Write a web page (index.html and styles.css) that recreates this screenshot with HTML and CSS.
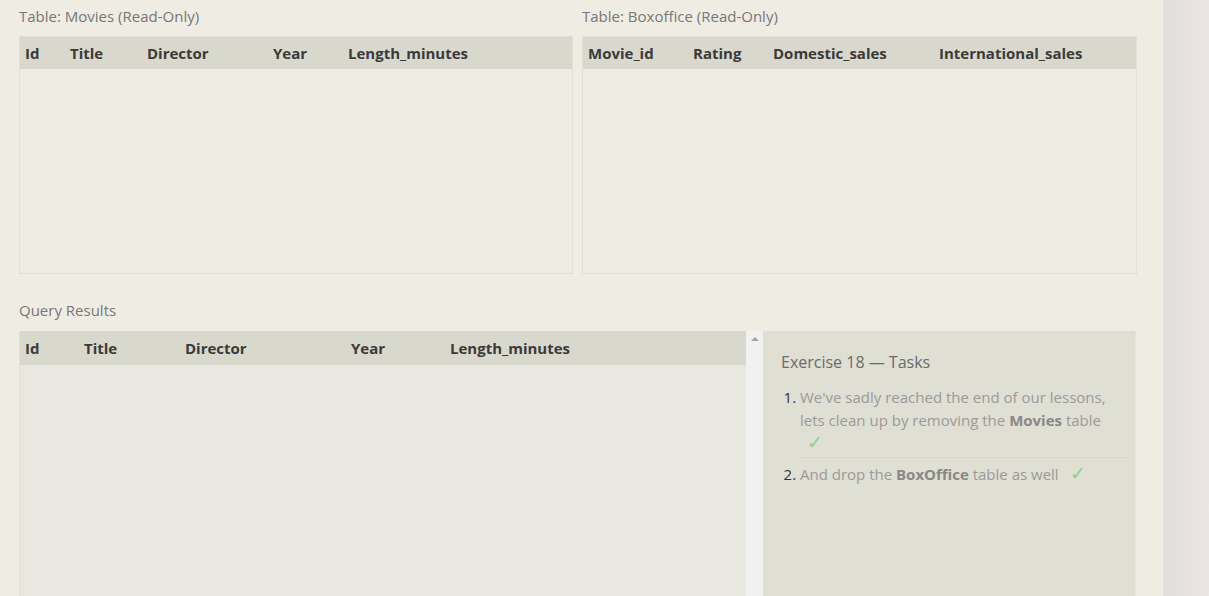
FILE: index.html
```html
<!DOCTYPE html>
<html>
<head>
<meta charset="utf-8">
<link rel="stylesheet" href="styles.css">
</head>
<body>
<div class="page">
  <main class="main">
    <div class="tables">
      <section class="tsec">
        <div class="label">Table: Movies (Read-Only)</div>
        <div class="tbox">
          <table class="grid movies">
            <thead><tr><th>Id</th><th>Title</th><th>Director</th><th>Year</th><th>Length_minutes</th></tr></thead>
          </table>
        </div>
      </section>
      <section class="tsec">
        <div class="label">Table: Boxoffice (Read-Only)</div>
        <div class="tbox">
          <table class="grid boxoffice">
            <thead><tr><th>Movie_id</th><th>Rating</th><th>Domestic_sales</th><th>International_sales</th></tr></thead>
          </table>
        </div>
      </section>
    </div>

    <div class="label qlabel">Query Results</div>
    <div class="results-row">
      <div class="rbox">
        <table class="grid results">
          <thead><tr><th>Id</th><th>Title</th><th>Director</th><th>Year</th><th>Length_minutes</th></tr></thead>
        </table>
      </div>
      <div class="scrollbar"><span class="arrow"></span></div>
      <aside class="tasks">
        <h2 class="tasks-title">Exercise 18 — Tasks</h2>
        <ol class="task-list">
          <li>We've sadly reached the end of our lessons, lets clean up by removing the <b>Movies</b> table <span class="check">✓</span></li>
          <li>And drop the <b>BoxOffice</b> table as well <span class="check">✓</span></li>
        </ol>
      </aside>
    </div>
  </main>
  <div class="side"></div>
</div>
</body>
</html>
```

FILE: styles.css
```css
html, body {
  margin: 0;
  padding: 0;
  height: 100%;
  overflow: hidden;
}
body {
  font-family: "Open Sans", "Noto Sans", sans-serif;
  background: #ebe6e3;
}
.page {
  display: flex;
  height: 596px;
}
.main {
  width: 1163px;
  flex: none;
  box-sizing: border-box;
  background: #efece4;
  padding: 6px 26px 0 19px;
}
.side {
  flex: 1;
  background: linear-gradient(to right, #e2dedb 0%, #e8e3e0 60%, #ebe6e3 100%);
}
.tables {
  display: grid;
  grid-template-columns: 554px 555px;
  column-gap: 9px;
}
.label {
  font-size: 15px;
  line-height: 20px;
  color: #777;
  margin-bottom: 10px;
}
.tbox {
  height: 238px;
  box-sizing: border-box;
  border: 1px solid #e2dfd7;
  background: #efece4;
}
.grid {
  border-collapse: collapse;
  table-layout: fixed;
  width: 100%;
}
.grid th {
  box-sizing: border-box;
  background: #d9d8cc;
  color: #3a3a3a;
  font-size: 15px;
  font-weight: 700;
  text-align: left;
  height: 32px;
  padding: 0 0 0 5px;
  white-space: nowrap;
}
.movies th:nth-child(1) { width: 45px; }
.movies th:nth-child(2) { width: 77px; }
.movies th:nth-child(3) { width: 126px; }
.movies th:nth-child(4) { width: 75px; }
.boxoffice th:nth-child(1) { width: 105px; }
.boxoffice th:nth-child(2) { width: 80px; }
.boxoffice th:nth-child(3) { width: 166px; }
.results th:nth-child(1) { width: 59px; }
.results th:nth-child(2) { width: 101px; }
.results th:nth-child(3) { width: 166px; }
.results th:nth-child(4) { width: 99px; }

.qlabel {
  margin-top: 26px;
  margin-bottom: 11px;
}
.results-row {
  display: flex;
  height: 300px;
  width: 1117px;
}
.rbox {
  width: 727px;
  flex: none;
  box-sizing: border-box;
  border-left: 1px solid #e2dfd7;
  background: #e9e8e0;
}
.rbox .grid th { height: 34px; }
.scrollbar {
  width: 17px;
  flex: none;
  background: #f1f1f1;
  position: relative;
}
.arrow {
  position: absolute;
  left: 5px;
  top: 6px;
  width: 0;
  height: 0;
  border-left: 4px solid transparent;
  border-right: 4px solid transparent;
  border-bottom: 4px solid #a3a3a3;
}
.tasks {
  flex: 1;
  background: #e0dfd3;
  border-right: 1px solid #e6e4da;
  padding: 20px 7px 0 18px;
}
.tasks-title {
  margin: 0 0 13px 0;
  font-size: 16px;
  font-weight: 400;
  line-height: 22px;
  color: #696b6e;
}
.task-list {
  margin: 0;
  padding: 0 0 0 19px;
  color: #333;
}
.task-list li {
  font-size: 15px;
  line-height: 23px;
  color: #9a9a9a;
  padding: 0 14px 0 0;
}
.task-list li::marker {
  color: #2f3340;
}
.task-list li:first-child {
  padding-bottom: 2px;
  border-bottom: 1px solid #d6d5c9;
  margin-bottom: 5px;
}
.task-list b {
  color: #888;
  font-weight: 700;
}
.check {
  color: #8bd08b;
  margin-left: 7px;
  font-size: 19px;
  line-height: 15px;
}
```
